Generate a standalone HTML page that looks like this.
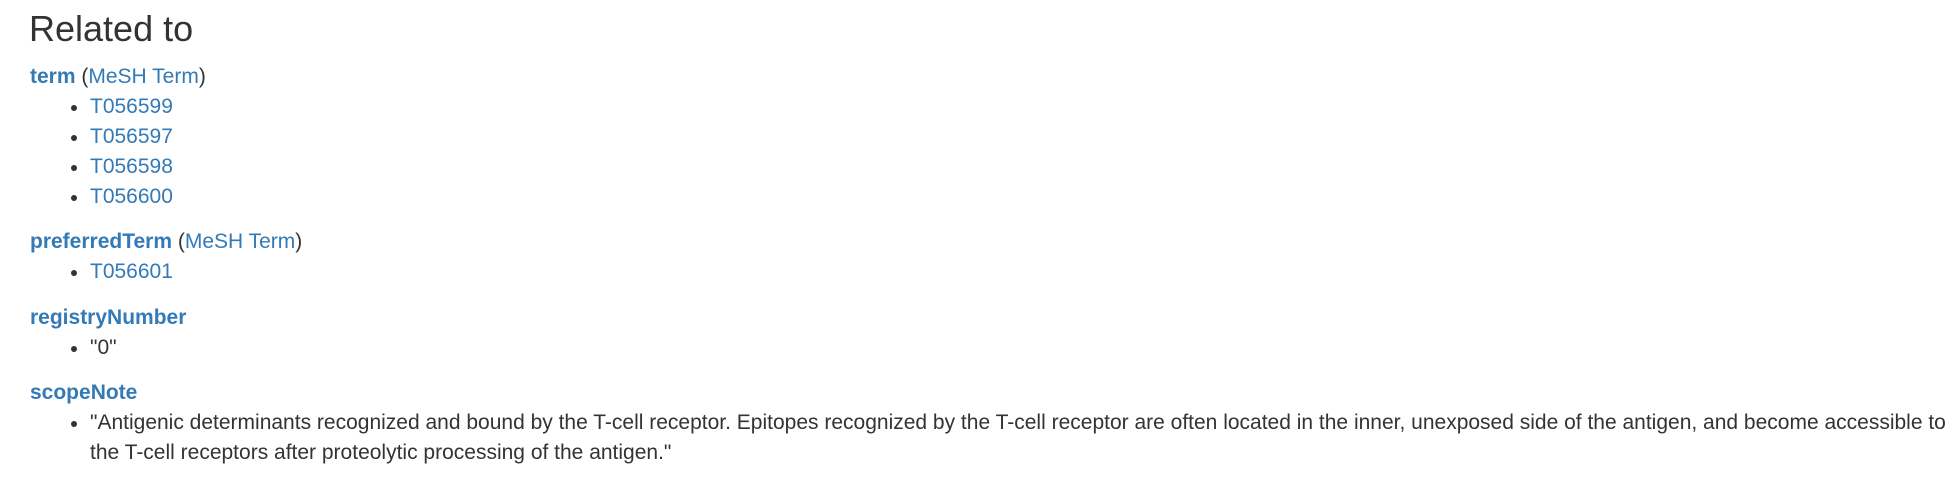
<!DOCTYPE html><html><head><meta charset="utf-8"><style>
body{margin:0;width:1956px;height:477px;background:#fff;font-family:"Liberation Sans",Arial,sans-serif;color:#333;font-size:21px;position:relative;overflow:hidden}
.l{position:absolute;left:30px;height:30px;line-height:30px;white-space:nowrap}
.i{left:90px}
.i:before{content:"";position:absolute;left:-19px;top:13px;width:6px;height:6px;border-radius:50%;background:#333}
a,.a{color:#337ab7;text-decoration:none}
b{color:#337ab7}
h1{position:absolute;left:29px;top:5px;margin:0;font-weight:normal;font-size:36px;line-height:48px}
</style></head><body>
<h1>Related to</h1>
<div class="l" style="top:62px"><b>term</b> (<a>MeSH Term</a>)</div>
<div class="l i" style="top:92px"><a>T056599</a></div>
<div class="l i" style="top:122px"><a>T056597</a></div>
<div class="l i" style="top:152px"><a>T056598</a></div>
<div class="l i" style="top:182px"><a>T056600</a></div>
<div class="l" style="top:227px"><b>preferredTerm</b> (<a>MeSH Term</a>)</div>
<div class="l i" style="top:257px"><a>T056601</a></div>
<div class="l" style="top:303px"><b>registryNumber</b></div>
<div class="l i" style="top:333px">"0"</div>
<div class="l" style="top:378px"><b>scopeNote</b></div>
<div class="l i" style="top:408px">"Antigenic determinants recognized and bound by the T-cell receptor. Epitopes recognized by the T-cell receptor are often located in the inner, unexposed side of the antigen, and become accessible to</div>
<div class="l" style="top:438px;left:90px">the T-cell receptors after proteolytic processing of the antigen."</div>
</body></html>
